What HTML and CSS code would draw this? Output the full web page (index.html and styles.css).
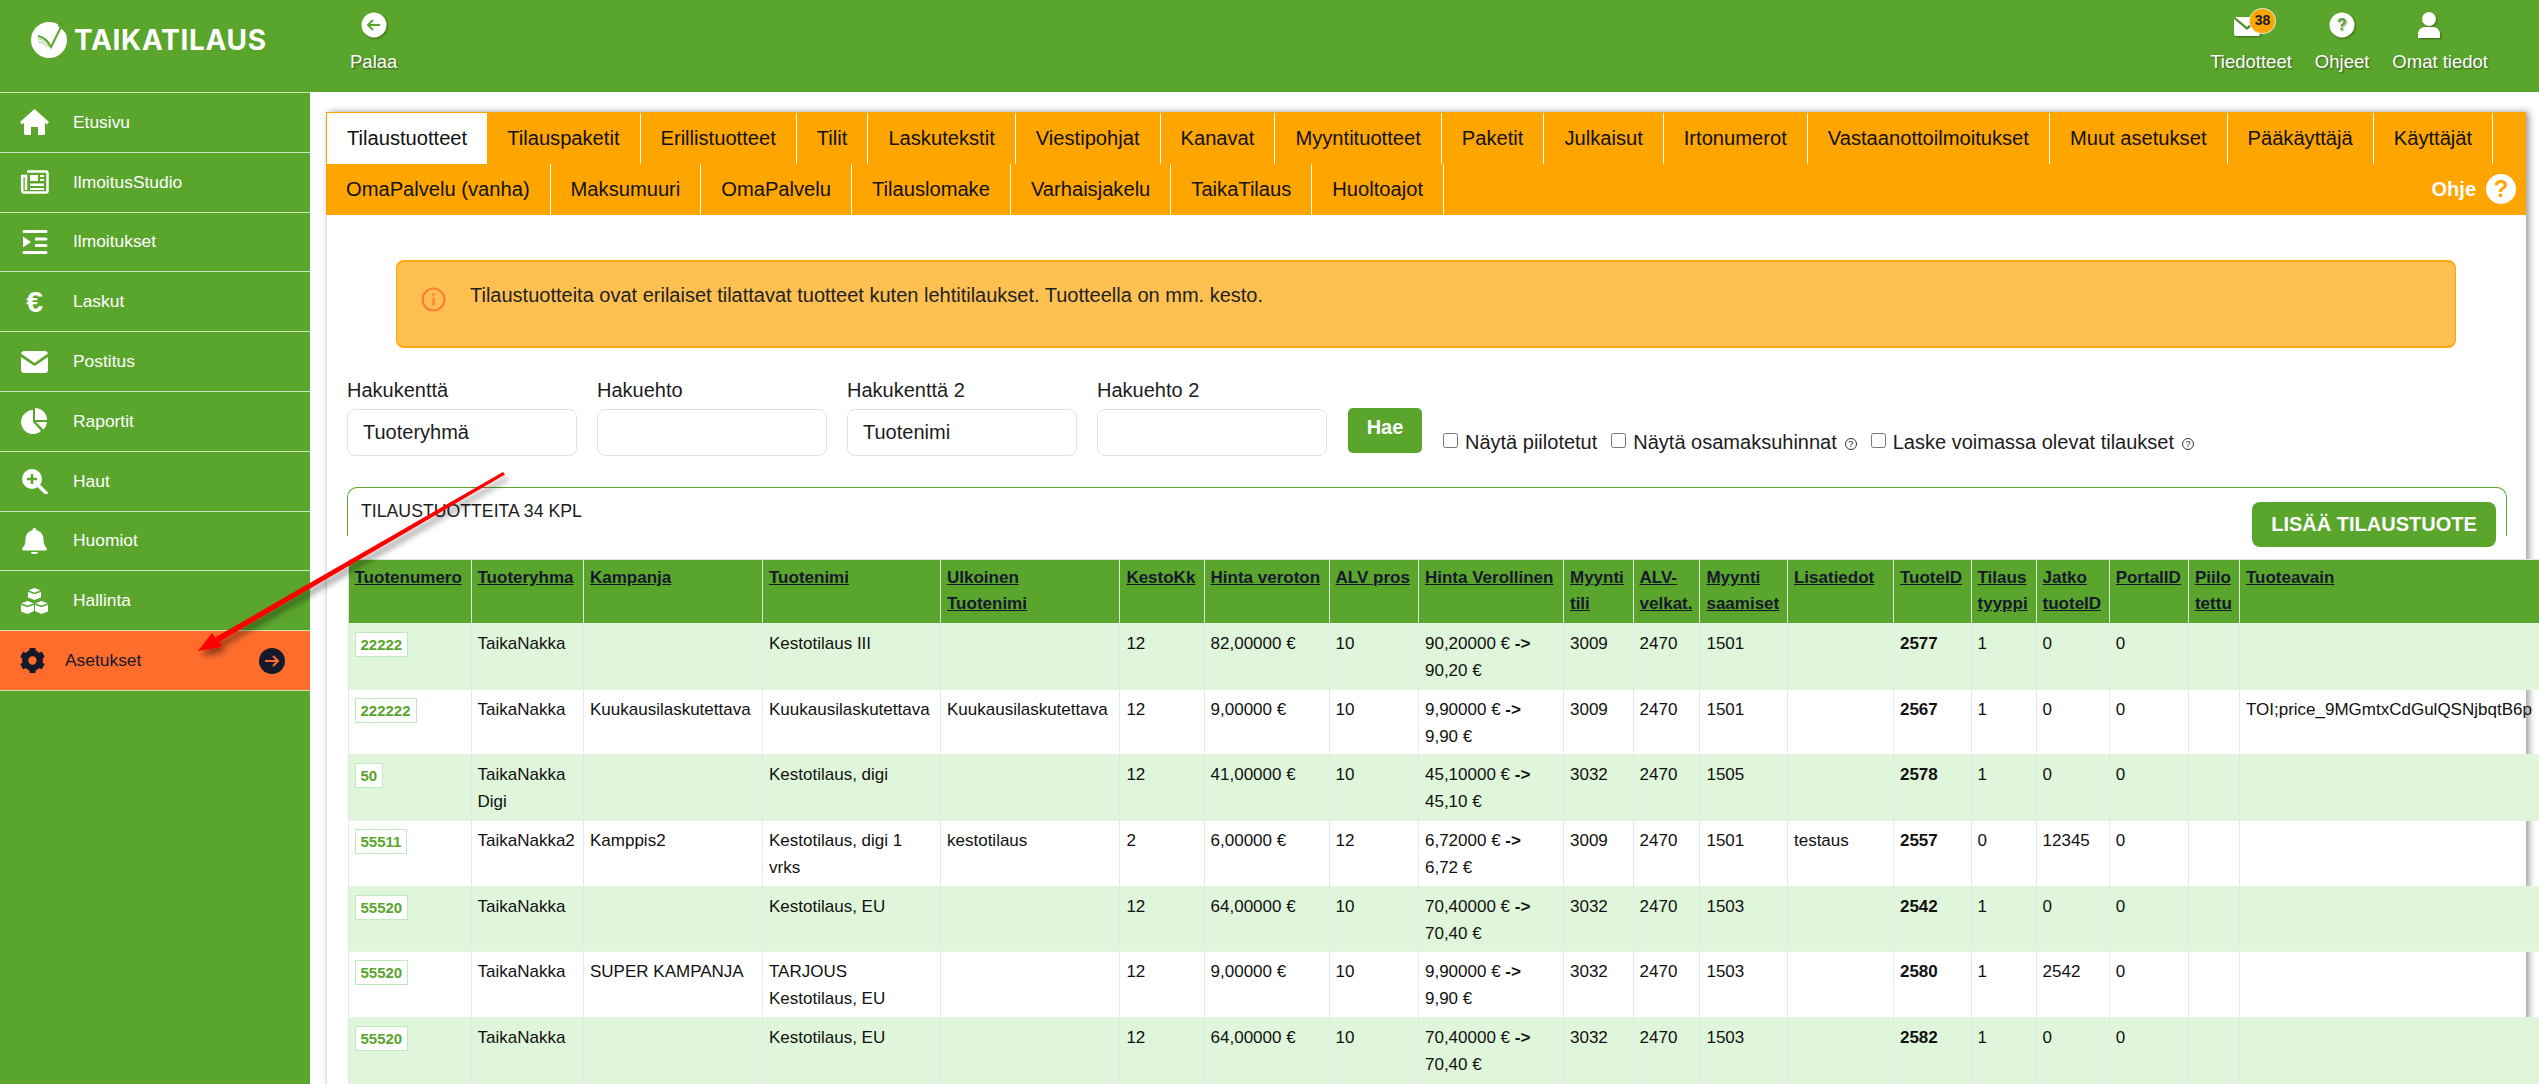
FILE: index.html
```html
<!DOCTYPE html>
<html lang="fi">
<head>
    <meta charset="UTF-8">
    <title>TaikaTilaus</title>
    <link rel="stylesheet" href="styles.css">
</head>
<body>
    <header class="topbar">
        <div class="logo">
            <svg class="logo-mark" viewBox="0 0 36 36">
                <circle cx="18" cy="18" r="18" fill="#fff"/>
                <path d="M27 -1 L38 -1 L38 14 L35 11 L27 4z" fill="#5aa52c"/>
                <path d="M7 14 C12 15 17 19 20 25 L31 3" fill="none" stroke="#5aa52c" stroke-width="2"/>
                <path d="M7 17 C11 17 15 20 18 25 M7 20 C11 20 14 22 16 25" fill="none" stroke="#9ccb7f" stroke-width="1"/>
            </svg>
            <span class="logo-text">TAIKATILAUS</span>
        </div>
        <a class="top-item back">
            <svg class="top-icon" viewBox="0 0 26 26">
                <circle cx="13" cy="13" r="12.5" fill="#fff"/>
                <path d="M19 13H7M12 8l-5 5 5 5" fill="none" stroke="#5aa52c" stroke-width="2"/>
            </svg>
            <span>Palaa</span>
        </a>
        <div class="top-right">
            <a class="top-item">
                <span class="mail">
                    <svg class="mail-icon" viewBox="0 0 26 19">
                        <path d="M1 0h24l-12 10z" fill="#fff"/>
                        <path d="M0 2v15a2 2 0 0 0 2 2h22a2 2 0 0 0 2-2V2L13 13z" fill="#fff"/>
                    </svg>
                    <span class="badge">38</span>
                </span>
                <span>Tiedotteet</span>
            </a>
            <a class="top-item">
                <svg class="top-icon" viewBox="0 0 26 26">
                    <circle cx="13" cy="13" r="12.5" fill="#fff"/>
                    <text x="13" y="18" class="q-mark">?</text>
                </svg>
                <span>Ohjeet</span>
            </a>
            <a class="top-item user">
                <svg class="top-icon user-icon" viewBox="0 0 24 26">
                    <circle cx="12" cy="7" r="7" fill="#fff"/>
                    <path d="M1 26v-4c0-4 3-7 7-7h8c4 0 7 3 7 7v4z" fill="#fff"/>
                </svg>
                <span>Omat tiedot</span>
            </a>
        </div>
    </header>

    <div class="layout">
        <nav class="sidebar">
            <a class="nav-item">
                <svg class="nav-icon" viewBox="0 0 29 26"><path d="M14.500 0 29 13l-2 2.500-2-1.800v10.800a1.500 1.500 0 0 1-1.500 1.500H18v-8h-7v8H5.500A1.500 1.500 0 0 1 4 24.500V13.700l-2 1.800L0 13z" fill="#fff"/></svg>
                <span>Etusivu</span>
            </a>
            <a class="nav-item">
                <svg class="nav-icon" viewBox="0 0 29 26">
                    <path d="M7 2.500h19a1.500 1.500 0 0 1 1.500 1.500v18a1.500 1.500 0 0 1-1.500 1.500H4A1.800 1.800 0 0 1 2.200 22V7H6v14" fill="none" stroke="#fff" stroke-width="2.500"/>
                    <path d="M10 6h8v6h-8zM20 6h4v2h-4zM20 10h4v2h-4zM10 14.500h14v2.500H10zM10 19h14v2H10z" fill="#fff"/>
                </svg>
                <span>IlmoitusStudio</span>
            </a>
            <a class="nav-item">
                <svg class="nav-icon" viewBox="0 0 29 26"><path d="M4 1h22a1.500 1.500 0 0 1 0 3H4a1.500 1.500 0 0 1 0-3zm11 7.500h11a1.500 1.500 0 0 1 0 3H15zm0 6.500h11a1.500 1.500 0 0 1 0 3H15zM4 22h22a1.500 1.500 0 0 1 0 3H4a1.500 1.500 0 0 1 0-3zM3 7.500l8 5.500-8 5.500z" fill="#fff"/></svg>
                <span>Ilmoitukset</span>
            </a>
            <a class="nav-item">
                <span class="euro">€</span>
                <span>Laskut</span>
            </a>
            <a class="nav-item">
                <svg class="nav-icon" viewBox="0 0 29 26"><path d="M4 2h21a3 3 0 0 1 3 2.500L14.500 14 1 4.500A3 3 0 0 1 4 2zM1 8l13.500 9L28 8v13a3 3 0 0 1-3 3H4a3 3 0 0 1-3-3z" fill="#fff"/></svg>
                <span>Postitus</span>
            </a>
            <a class="nav-item">
                <svg class="nav-icon" viewBox="0 0 29 26"><path d="M13 2a12 12 0 1 0 8 21l-8-9zM15 0v12h12A12 12 0 0 0 15 0zM16 14l7.500 7.500A12 12 0 0 0 27 14z" fill="#fff"/></svg>
                <span>Raportit</span>
            </a>
            <a class="nav-item">
                <svg class="nav-icon" viewBox="0 0 29 26"><circle cx="12" cy="11" r="8.500" fill="#fff" stroke="#fff" stroke-width="3"/><path d="M12 6v10M7 11h10" stroke="#5aa52c" stroke-width="2.500"/><path d="M19 18l7 7" stroke="#fff" stroke-width="3.500" stroke-linecap="round"/></svg>
                <span>Haut</span>
            </a>
            <a class="nav-item">
                <svg class="nav-icon" viewBox="0 0 29 26"><path d="M14.500 0a2 2 0 0 1 2 2.200C21 3.200 23.500 7 23.500 11c0 5 1 6.500 3 9a1.500 1.500 0 0 1-1 2.500h-22a1.500 1.500 0 0 1-1-2.500c2-2.500 3-4 3-9 0-4 2.500-7.800 7-8.800a2 2 0 0 1 2-2.200zM11 24h7a3.500 2 0 0 1-7 0z" fill="#fff"/></svg>
                <span>Huomiot</span>
            </a>
            <a class="nav-item">
                <svg class="nav-icon" viewBox="0 0 29 26"><path d="M14.500 0 21 2.500v7L14.500 12 8 9.500v-7zM7.500 13l6.500 2.500v7.500L7.500 26 1 23.500v-8zM21.500 13l6.500 2.500v8L21.500 26 15 23v-7.500z" fill="#fff"/><path d="M8 3l6.500 2.500L21 3M1 16l6.500 2.500L14 16M15 16l6.500 2.500L28 16" fill="none" stroke="#5aa52c" stroke-width="1.500"/></svg>
                <span>Hallinta</span>
            </a>
            <a class="nav-item active">
                <svg class="nav-icon" viewBox="0 0 24 24">
                    <circle cx="12" cy="12" r="7" fill="none" stroke="#16192b" stroke-width="6"/>
                    <g fill="#16192b">
                        <rect x="9" y="0" width="6" height="5" rx="1"/>
                        <rect x="9" y="19" width="6" height="5" rx="1"/>
                        <rect x="9" y="0" width="6" height="5" rx="1" transform="rotate(60 12 12)"/>
                        <rect x="9" y="0" width="6" height="5" rx="1" transform="rotate(120 12 12)"/>
                        <rect x="9" y="0" width="6" height="5" rx="1" transform="rotate(240 12 12)"/>
                        <rect x="9" y="0" width="6" height="5" rx="1" transform="rotate(300 12 12)"/>
                    </g>
                </svg>
                <span>Asetukset</span>
                <svg class="nav-go" viewBox="0 0 26 26">
                    <circle cx="13" cy="13" r="13" fill="#16192b"/>
                    <path d="M6 13h13M14 8l5 5-5 5" fill="none" stroke="#ff6c2c" stroke-width="2"/>
                </svg>
            </a>
        </nav>

        <main class="content">
            <section class="panel">
                <div class="tabs">
                    <a class="tab current">Tilaustuotteet</a>
                    <a class="tab">Tilauspaketit</a>
                    <a class="tab">Erillistuotteet</a>
                    <a class="tab">Tilit</a>
                    <a class="tab">Laskutekstit</a>
                    <a class="tab">Viestipohjat</a>
                    <a class="tab">Kanavat</a>
                    <a class="tab">Myyntituotteet</a>
                    <a class="tab">Paketit</a>
                    <a class="tab">Julkaisut</a>
                    <a class="tab">Irtonumerot</a>
                    <a class="tab">Vastaanottoilmoitukset</a>
                    <a class="tab">Muut asetukset</a>
                    <a class="tab">Pääkäyttäjä</a>
                    <a class="tab">Käyttäjät</a>
                    <a class="tab">OmaPalvelu (vanha)</a>
                    <a class="tab">Maksumuuri</a>
                    <a class="tab">OmaPalvelu</a>
                    <a class="tab">Tilauslomake</a>
                    <a class="tab">Varhaisjakelu</a>
                    <a class="tab">TaikaTilaus</a>
                    <a class="tab">Huoltoajot</a>
                    <a class="help-link">Ohje <span class="help-q">?</span></a>
                </div>

                <div class="alert">
                    <svg class="alert-icon" viewBox="0 0 24 24">
                        <circle cx="12" cy="12" r="10.500" fill="none" stroke="#ff7a3a" stroke-width="2"/>
                        <path d="M12 10.500v7.500M12 6v2.500" stroke="#ff7a3a" stroke-width="2"/>
                    </svg>
                    <span>Tilaustuotteita ovat erilaiset tilattavat tuotteet kuten lehtitilaukset. Tuotteella on mm. kesto.</span>
                </div>

                <form class="search">
                    <div class="field">
                        <label>Hakukenttä</label>
                        <input type="text" value="Tuoteryhmä">
                    </div>
                    <div class="field">
                        <label>Hakuehto</label>
                        <input type="text">
                    </div>
                    <div class="field">
                        <label>Hakukenttä 2</label>
                        <input type="text" value="Tuotenimi">
                    </div>
                    <div class="field">
                        <label>Hakuehto 2</label>
                        <input type="text">
                    </div>
                    <button type="button" class="btn btn-search">Hae</button>
                    <div class="checks">
                        <label class="check"><input type="checkbox"> Näytä piilotetut</label>
                        <label class="check"><input type="checkbox"> Näytä osamaksuhinnat <span class="mini-q">?</span></label>
                        <label class="check"><input type="checkbox"> Laske voimassa olevat tilaukset <span class="mini-q">?</span></label>
                    </div>
                </form>

                <div class="card-head">
                    <span class="card-title">TILAUSTUOTTEITA 34 KPL</span>
                    <button type="button" class="btn btn-add">LISÄÄ TILAUSTUOTE</button>
                </div>

                <table class="products">
                    <colgroup>
                        <col class="c-num"><col class="c-group"><col class="c-camp"><col class="c-name"><col class="c-ext">
                        <col class="c-months"><col class="c-net"><col class="c-vat"><col class="c-gross"><col class="c-acc">
                        <col class="c-alv"><col class="c-rec"><col class="c-info"><col class="c-id"><col class="c-type">
                        <col class="c-next"><col class="c-portal"><col class="c-hidden"><col class="c-key">
                    </colgroup>
                    <thead>
                        <tr>
                            <th><a>Tuotenumero</a></th><th><a>Tuoteryhma</a></th><th><a>Kampanja</a></th><th><a>Tuotenimi</a></th><th><a>Ulkoinen<br>Tuotenimi</a></th>
                            <th><a>KestoKk</a></th><th><a>Hinta veroton</a></th><th><a>ALV pros</a></th><th><a>Hinta Verollinen</a></th><th><a>Myynti tili</a></th>
                            <th><a>ALV-velkat.</a></th><th><a>Myynti saamiset</a></th><th><a>Lisatiedot</a></th><th><a>TuoteID</a></th><th><a>Tilaus tyyppi</a></th>
                            <th><a>Jatko tuoteID</a></th><th><a>PortalID</a></th><th><a>Piilo tettu</a></th><th><a>Tuoteavain</a></th>
                        </tr>
                    </thead>
                    <tbody>
                        <tr>
                            <td><a class="code">22222</a></td><td>TaikaNakka</td><td></td><td>Kestotilaus III</td><td></td>
                            <td>12</td><td>82,00000 €</td><td>10</td><td>90,20000 € <b>-&gt;</b> 90,20 €</td><td>3009</td>
                            <td>2470</td><td>1501</td><td></td><td><b>2577</b></td><td>1</td>
                            <td>0</td><td>0</td><td></td><td></td>
                        </tr>
                        <tr>
                            <td><a class="code">222222</a></td><td>TaikaNakka</td><td>Kuukausilaskutettava</td><td>Kuukausilaskutettava</td><td>Kuukausilaskutettava</td>
                            <td>12</td><td>9,00000 €</td><td>10</td><td>9,90000 € <b>-&gt;</b> 9,90 €</td><td>3009</td>
                            <td>2470</td><td>1501</td><td></td><td><b>2567</b></td><td>1</td>
                            <td>0</td><td>0</td><td></td><td class="key">TOI;price_9MGmtxCdGulQSNjbqtB6p</td>
                        </tr>
                        <tr>
                            <td><a class="code">50</a></td><td>TaikaNakka Digi</td><td></td><td>Kestotilaus, digi</td><td></td>
                            <td>12</td><td>41,00000 €</td><td>10</td><td>45,10000 € <b>-&gt;</b> 45,10 €</td><td>3032</td>
                            <td>2470</td><td>1505</td><td></td><td><b>2578</b></td><td>1</td>
                            <td>0</td><td>0</td><td></td><td></td>
                        </tr>
                        <tr>
                            <td><a class="code">55511</a></td><td>TaikaNakka2</td><td>Kamppis2</td><td>Kestotilaus, digi 1 vrks</td><td>kestotilaus</td>
                            <td>2</td><td>6,00000 €</td><td>12</td><td>6,72000 € <b>-&gt;</b> 6,72 €</td><td>3009</td>
                            <td>2470</td><td>1501</td><td>testaus</td><td><b>2557</b></td><td>0</td>
                            <td>12345</td><td>0</td><td></td><td></td>
                        </tr>
                        <tr>
                            <td><a class="code">55520</a></td><td>TaikaNakka</td><td></td><td>Kestotilaus, EU</td><td></td>
                            <td>12</td><td>64,00000 €</td><td>10</td><td>70,40000 € <b>-&gt;</b> 70,40 €</td><td>3032</td>
                            <td>2470</td><td>1503</td><td></td><td><b>2542</b></td><td>1</td>
                            <td>0</td><td>0</td><td></td><td></td>
                        </tr>
                        <tr>
                            <td><a class="code">55520</a></td><td>TaikaNakka</td><td>SUPER KAMPANJA</td><td>TARJOUS Kestotilaus, EU</td><td></td>
                            <td>12</td><td>9,00000 €</td><td>10</td><td>9,90000 € <b>-&gt;</b> 9,90 €</td><td>3032</td>
                            <td>2470</td><td>1503</td><td></td><td><b>2580</b></td><td>1</td>
                            <td>2542</td><td>0</td><td></td><td></td>
                        </tr>
                        <tr>
                            <td><a class="code">55520</a></td><td>TaikaNakka</td><td></td><td>Kestotilaus, EU</td><td></td>
                            <td>12</td><td>64,00000 €</td><td>10</td><td>70,40000 € <b>-&gt;</b> 70,40 €</td><td>3032</td>
                            <td>2470</td><td>1503</td><td></td><td><b>2582</b></td><td>1</td>
                            <td>0</td><td>0</td><td></td><td></td>
                        </tr>
                    </tbody>
                </table>
            </section>
        </main>
    </div>

    <!-- annotation arrow drawn over the page -->
    <svg class="annotation" viewBox="0 0 2539 1084">
        <defs>
            <filter id="arrowShadow" x="-10%" y="-10%" width="125%" height="130%">
                <feDropShadow dx="3" dy="5" stdDeviation="3" flood-color="#000" flood-opacity="0.45"/>
            </filter>
        </defs>
        <path d="M503 472 L505 474.500 L219 642 L222 647 L198 651 L212 633 L215 637.500z" fill="#f00" filter="url(#arrowShadow)"/>
    </svg>
</body>
</html>
```

FILE: styles.css
```css
* {
    box-sizing: border-box;
}
html, body {
    height: 100%;
}
body {
    margin: 0;
    width: 2539px;
    height: 1084px;
    overflow: hidden;
    position: relative;
    font-family: "Liberation Sans", Arial, sans-serif;
    font-size: 20px;
    color: #1c1c1c;
    background-color: #ffffff;
}

/* top bar */
.topbar {
    display: flex;
    height: 92px;
    background-color: #5aa52c;
    color: #ffffff;
}
.logo {
    display: flex;
    align-items: flex-start;
    width: 350px;
    padding: 22px 0 0 31px;
}
.logo-mark {
    width: 36px;
    height: 36px;
    flex: none;
    overflow: hidden;
}
.logo-text {
    margin: 4px 0 0 7px;
    font-family: Inter, sans-serif;
    font-weight: 700;
    font-size: 28px;
    line-height: 28px;
    letter-spacing: 0.700px;
}
.top-item {
    display: flex;
    flex-direction: column;
    align-items: center;
    padding-top: 12px;
    font-size: 18.500px;
    line-height: 24px;
    text-shadow: 1px 1px 2px rgba(0, 0, 0, 0.45);
}
.top-icon {
    width: 26px;
    height: 26px;
    margin-bottom: 12px;
    filter: drop-shadow(1px 1px 1px rgba(0, 0, 0, 0.35));
}
.q-mark {
    font-size: 16px;
    font-weight: bold;
    text-anchor: middle;
    fill: #5aa52c;
}
.top-right {
    display: flex;
    gap: 23px;
    margin-left: auto;
    padding-right: 51px;
}
.user-icon {
    margin-right: 22px;
}
.mail {
    position: relative;
    display: block;
    width: 26px;
    height: 26px;
    margin: 0 8px 12px 0;
}
.mail-icon {
    display: block;
    width: 26px;
    height: 19px;
    margin-top: 5px;
    filter: drop-shadow(1px 1px 1px rgba(0, 0, 0, 0.35));
}
.badge {
    position: absolute;
    left: 15px;
    top: -4px;
    width: 27px;
    height: 26px;
    border-radius: 50%;
    border: 1px solid #d6e8c8;
    background-color: #ffa500;
    color: #1c1c2a;
    font-size: 14px;
    font-weight: bold;
    line-height: 23px;
    text-align: center;
    text-shadow: none;
}

/* sidebar */
.layout {
    display: flex;
    height: 992px;
}
.sidebar {
    width: 310px;
    flex: none;
    background-color: #5aa52c;
    border-top: 1px solid #cfe3bb;
}
.nav-item {
    display: flex;
    align-items: center;
    gap: 24px;
    height: 59.800px;
    padding-left: 20px;
    border-bottom: 1px solid #cfe3bb;
    color: #ffffff;
    font-size: 17.400px;
}
.nav-icon {
    width: 29px;
    height: 26px;
    flex: none;
}
.euro {
    width: 29px;
    flex: none;
    font-size: 30px;
    font-weight: bold;
    line-height: 26px;
    text-align: center;
}
.nav-item.active {
    gap: 20px;
    background-color: #ff6c2c;
    color: #16192b;
}
.nav-item.active .nav-icon {
    width: 25px;
    height: 25px;
}
.nav-go {
    width: 26px;
    height: 26px;
    margin-left: auto;
    margin-right: 25px;
}

/* main panel */
.content {
    flex: 1;
    min-width: 0;
    padding: 20px 13px 0 16px;
}
.panel {
    height: 100%;
    background-color: #ffffff;
    border-left: 1px solid #dddddd;
    box-shadow: 3px 0 7px rgba(0, 0, 0, 0.4);
}
.tabs {
    display: flex;
    flex-wrap: wrap;
    align-items: flex-start;
    height: 103px;
    margin-left: -1px;
    padding-top: 1px;
    background-color: #ffa500;
}
.tab {
    height: 50.500px;
    padding: 0 20px;
    border-right: 1px solid #ffffff;
    color: #111111;
    font-size: 20.150px;
    line-height: 50px;
    white-space: nowrap;
}
.tab.current {
    margin-left: 1px;
    background-color: #ffffff;
    border-right: none;
}
.help-link {
    display: flex;
    align-items: center;
    gap: 10px;
    height: 50px;
    margin-left: auto;
    padding-right: 10px;
    color: #ffffff;
    font-weight: bold;
}
.help-q {
    width: 30px;
    height: 30px;
    border-radius: 50%;
    background-color: #ffffff;
    color: #ffa500;
    font-size: 24px;
    line-height: 30px;
    text-align: center;
}

.alert {
    display: flex;
    gap: 24px;
    height: 88px;
    margin: 45px 70px 0 69px;
    padding: 21px 24px;
    border: 1px solid #ffa500;
    border-top-width: 2px;
    border-bottom-width: 2px;
    border-radius: 8px;
    background-color: #ffc052;
    line-height: 24px;
    color: #222222;
}
.alert-icon {
    width: 25px;
    height: 25px;
    flex: none;
    margin-top: 4px;
}

/* search form */
.search {
    display: flex;
    gap: 20px;
    margin: 30px 0 0 20px;
}
.field {
    width: 230px;
}
.field label {
    display: block;
    margin-bottom: 7px;
    line-height: 24px;
}
.field input {
    width: 100%;
    height: 47px;
    padding: 0 15px;
    border: 1px solid #e2e2e2;
    border-radius: 8px;
    font-family: inherit;
    font-size: 20px;
    color: #1c1c1c;
}
.btn {
    border: none;
    border-radius: 5px;
    background-color: #5aa52c;
    color: #ffffff;
    font-family: inherit;
    font-size: 20px;
    font-weight: bold;
}
.btn-search {
    width: 74px;
    height: 45px;
    margin: 30px 0 0 1px;
    padding: 0 0 6px;
}
.checks {
    display: flex;
    gap: 14px;
    margin: 50px 0 0 1px;
    line-height: 24px;
}
.check {
    display: flex;
    align-items: center;
    gap: 7px;
    white-space: nowrap;
}
.check input {
    width: 15px;
    height: 15px;
    margin: 0 0 4px;
}
.mini-q {
    width: 12px;
    height: 12px;
    margin-left: 1px;
    margin-top: 3px;
    border: 1px solid #333333;
    border-radius: 50%;
    font-size: 9px;
    line-height: 10px;
    text-align: center;
}

/* list head */
.card-head {
    display: flex;
    justify-content: space-between;
    align-items: flex-start;
    height: 49px;
    margin: 31px 19px 23px 20px;
    border: 1px solid #5aa52c;
    border-bottom: none;
    border-radius: 10px 10px 0 0;
}
.card-title {
    margin: 11px 0 0 13px;
    font-size: 17.700px;
    line-height: 24px;
}
.btn-add {
    width: 244px;
    height: 45px;
    margin: 14px 10px 0 0;
    border-radius: 8px;
}

/* product table */
.products {
    width: 2292px;
    margin-left: 20.500px;
    table-layout: fixed;
    border-collapse: collapse;
    font-size: 17px;
}
.c-num { width: 123px; }
.c-group { width: 112.500px; }
.c-camp { width: 179px; }
.c-name { width: 178px; }
.c-ext { width: 179.400px; }
.c-months { width: 84.200px; }
.c-net { width: 125px; }
.c-vat { width: 89.400px; }
.c-gross { width: 145px; }
.c-acc { width: 69.600px; }
.c-alv { width: 66.900px; }
.c-rec { width: 87.500px; }
.c-info { width: 106px; }
.c-id { width: 77.600px; }
.c-type { width: 65px; }
.c-next { width: 73.100px; }
.c-portal { width: 79.300px; }
.c-hidden { width: 51px; }
.c-key { width: 400px; }
.products th {
    height: 64px;
    padding: 5px 6px;
    background-color: #5aa52c;
    border: 1px solid #dde8dd;
    border-bottom: none;
    color: #16192b;
    line-height: 26px;
    text-align: left;
    vertical-align: top;
    text-decoration: underline;
}
.products td {
    height: 65.700px;
    padding: 6px 6px 3px;
    border: 1px solid #e3e6ea;
    border-top-color: #e6f2e2;
    border-bottom-color: #e6f2e2;
    color: #111111;
    line-height: 27px;
    vertical-align: top;
}
.products tbody tr:nth-child(odd) td {
    background-color: #dff6da;
}
.code {
    display: inline-block;
    margin-top: 2px;
    padding: 0 5px;
    height: 25px;
    border: 1px solid #bfeabf;
    background-color: #ffffff;
    color: #5aa52c;
    font-size: 15px;
    font-weight: bold;
    line-height: 24px;
    vertical-align: top;
}
.key {
    white-space: nowrap;
}

.annotation {
    position: absolute;
    left: 0;
    top: 0;
    width: 2539px;
    height: 1084px;
    pointer-events: none;
}
```
